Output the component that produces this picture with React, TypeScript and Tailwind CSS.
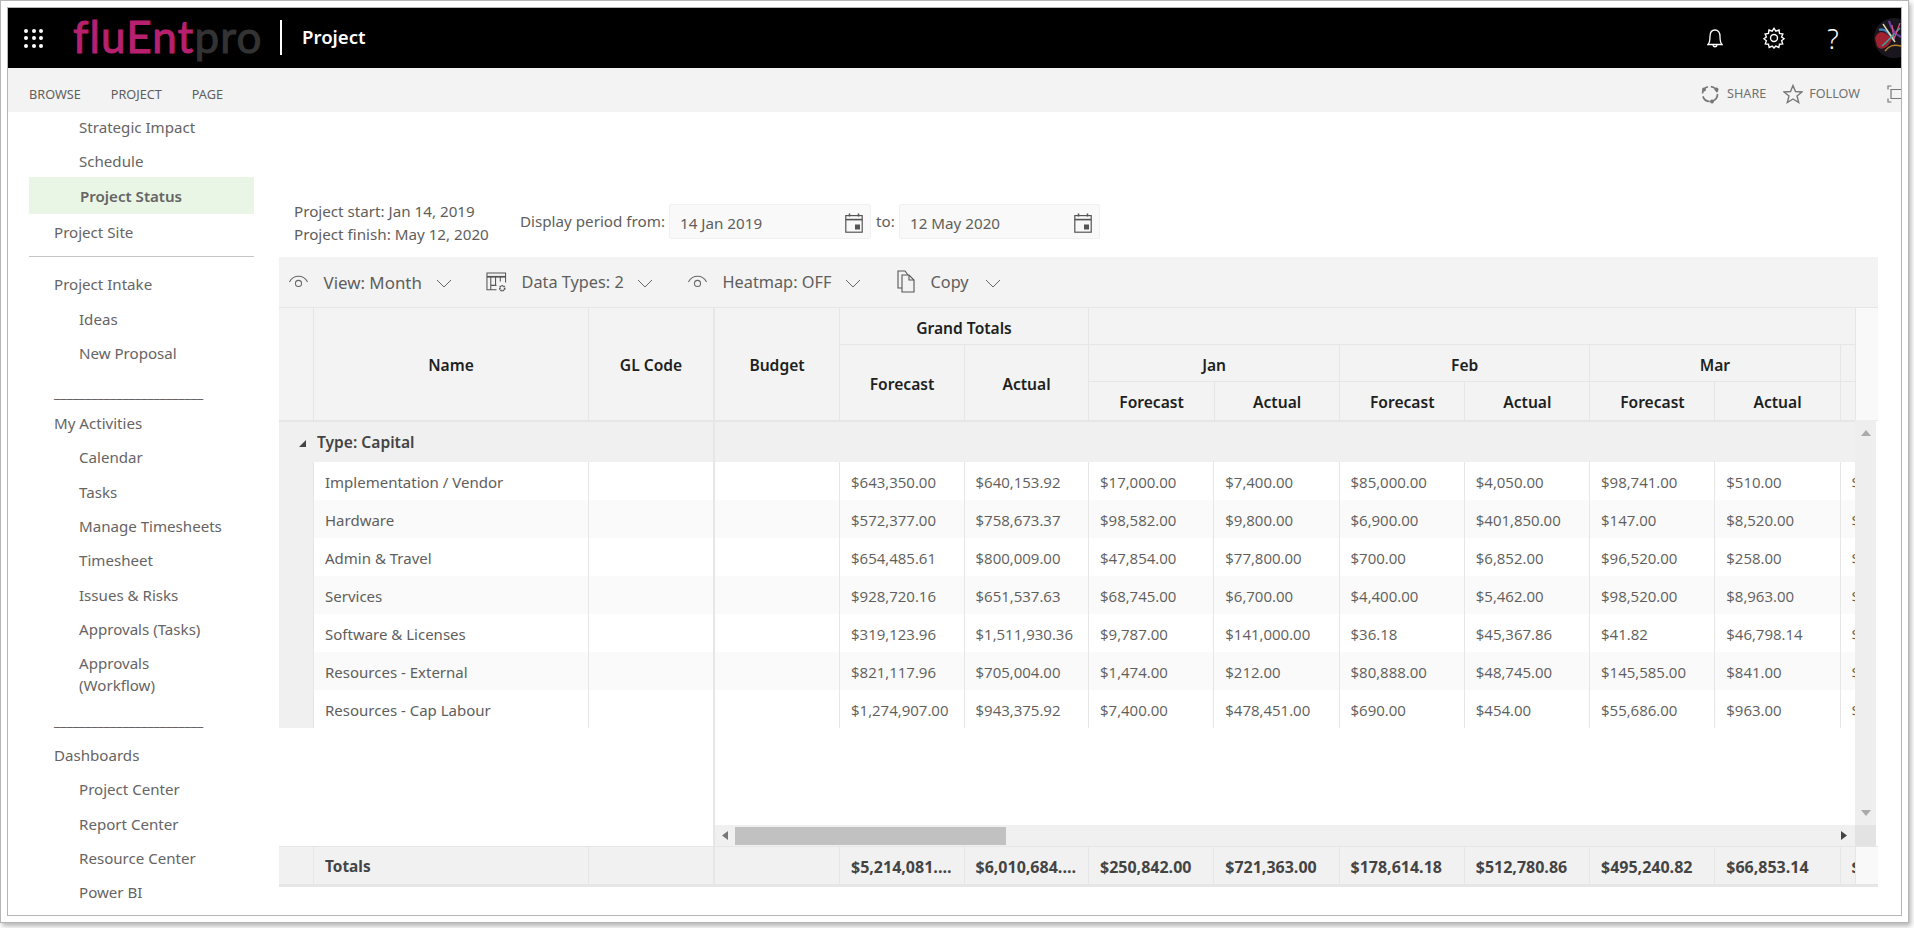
import React from "react";

const sans = "font-['Open_Sans','Noto_Sans',sans-serif]";
const ui = "font-['Noto_Sans','Open_Sans',sans-serif]";

const B = "border-[#e6e6e6]";

function Nav({ children, sub, h = "h-[34.4px]" }: { children: React.ReactNode; sub?: boolean; h?: string }) {
  return (
    <div className={`${h} flex items-center text-[15.1px] text-[#666464] leading-[22px] shrink-0 ${sub ? "pl-[71px]" : "pl-[46px]"}`}>
      <span>{children}</span>
    </div>
  );
}

function Rule({ h = "h-[34.4px]", pb = "pb-0" }: { h?: string; pb?: string }) {
  return (
    <div className={`${h} ${pb} pl-[46px] shrink-0 flex items-end text-[14px] leading-[22px] text-[#666464] overflow-hidden`}>
      <span className="whitespace-nowrap">________________________</span>
    </div>
  );
}

function Sidebar() {
  return (
    <div className="w-[271px] shrink-0 flex flex-col overflow-hidden -mt-[2px]">
      <Nav sub>Strategic Impact</Nav>
      <Nav sub h="h-[33px]">Schedule</Nav>
      <div className="ml-[21px] w-[225px] h-[37px] bg-[#e9f6e6] shrink-0 flex items-center pl-[51px] pt-[1px] text-[15.1px] font-semibold text-[#666464]">Project Status</div>
      <Nav h="h-[35px]">Project Site</Nav>
      <div className="ml-[21px] w-[225px] h-[1px] bg-[#c8c6c4] mt-[7px] mb-[9px] shrink-0" />
      <Nav h="h-[35px]">Project Intake</Nav>
      <Nav sub>Ideas</Nav>
      <Nav sub>New Proposal</Nav>
      <Rule h="h-[35.4px]" pb="pb-[2px]" />
      <Nav>My Activities</Nav>
      <Nav sub>Calendar</Nav>
      <Nav sub>Tasks</Nav>
      <Nav sub>Manage Timesheets</Nav>
      <Nav sub>Timesheet</Nav>
      <Nav sub>Issues &amp; Risks</Nav>
      <Nav sub>Approvals (Tasks)</Nav>
      <Nav sub h="h-[56px]">Approvals<br />(Workflow)</Nav>
      <Rule h="h-[35.4px]" pb="pb-[6px]" />
      <Nav>Dashboards</Nav>
      <Nav sub>Project Center</Nav>
      <Nav sub>Report Center</Nav>
      <Nav sub>Resource Center</Nav>
      <Nav sub>Power BI</Nav>
    </div>
  );
}

function Eye() {
  return (
    <svg width="22" height="16" viewBox="0 0 22 16" fill="none" stroke="#666" strokeWidth="1.1">
      <path d="M1.5 8 C4 3.5 7.5 2 11 2 C14.5 2 18 3.5 20.5 8" />
      <circle cx="11" cy="9.5" r="3.2" />
    </svg>
  );
}
function Chevron() {
  return (
    <svg width="16" height="9" viewBox="0 0 16 9" fill="none" stroke="#666" strokeWidth="1" className="shrink-0 mt-[2px]">
      <path d="M1 1 L8 8 L15 1" />
    </svg>
  );
}
function TableGear() {
  return (
    <svg width="21" height="21" viewBox="0 0 22 22" fill="none" stroke="#555" strokeWidth="1.1">
      <path d="M11 18.5 H1 V1 H20.5 V11" />
      <path d="M1 5 H20.5" strokeWidth="1.8" />
      <path d="M5 5 V18.5 M10 5 V14 M5 14 H11 M15 5 V10" />
      <circle cx="17" cy="17" r="2.6" strokeWidth="1.7" strokeDasharray="1.6 0.6" />
    </svg>
  );
}
function CopyIcon() {
  return (
    <svg width="20" height="24" viewBox="0 0 20 24" fill="none" stroke="#555" strokeWidth="1.1">
      <path d="M6 18 H2 V1 H9 L12 5" />
      <path d="M6 5 H13 L18 10 V22 H6 Z" />
      <path d="M13 5 V10 H18" />
    </svg>
  );
}
function Cal() {
  return (
    <svg width="18" height="20" viewBox="0 0 18 20" fill="none" stroke="#555" strokeWidth="1.2">
      <rect x="0.8" y="2.6" width="16.4" height="16.6" />
      <path d="M0.8 6.6 H17.2" strokeWidth="1.6" />
      <path d="M4.5 0.5 V3.5 M13.5 0.5 V3.5" strokeWidth="1.5" />
      <rect x="10" y="11.5" width="5" height="5" fill="#555" stroke="none" />
    </svg>
  );
}

function ToolItem({ icon, label, tw, size = "text-[16.3px]", after = "mr-[34px]" }: { icon: React.ReactNode; label: string; tw: string; size?: string; after?: string }) {
  return (
    <div className={`flex items-center gap-[14.5px] ${after} pt-[1px]`}>
      <div className="w-[21px] flex justify-center shrink-0 -mt-[1px]">{icon}</div>
      <span className={`${tw} ${size} text-[#605e5c] whitespace-nowrap shrink-0`}>{label}</span>
      <Chevron />
    </div>
  );
}

const rows = [
  ["$643,350.00", "$640,153.92", "$17,000.00", "$7,400.00", "$85,000.00", "$4,050.00", "$98,741.00", "$510.00", "$"],
  ["$572,377.00", "$758,673.37", "$98,582.00", "$9,800.00", "$6,900.00", "$401,850.00", "$147.00", "$8,520.00", "$"],
  ["$654,485.61", "$800,009.00", "$47,854.00", "$77,800.00", "$700.00", "$6,852.00", "$96,520.00", "$258.00", "$"],
  ["$928,720.16", "$651,537.63", "$68,745.00", "$6,700.00", "$4,400.00", "$5,462.00", "$98,520.00", "$8,963.00", "$"],
  ["$319,123.96", "$1,511,930.36", "$9,787.00", "$141,000.00", "$36.18", "$45,367.86", "$41.82", "$46,798.14", "$"],
  ["$821,117.96", "$705,004.00", "$1,474.00", "$212.00", "$80,888.00", "$48,745.00", "$145,585.00", "$841.00", "$"],
  ["$1,274,907.00", "$943,375.92", "$7,400.00", "$478,451.00", "$690.00", "$454.00", "$55,686.00", "$963.00", "$"],
];
const names = ["Implementation / Vendor", "Hardware", "Admin & Travel", "Services", "Software & Licenses", "Resources - External", "Resources - Cap Labour"];
const totals = ["$5,214,081....", "$6,010,684....", "$250,842.00", "$721,363.00", "$178,614.18", "$512,780.86", "$495,240.82", "$66,853.14", "$"];

const HT = "flex items-center justify-center font-semibold text-[15.6px] text-[#201f1e] pt-[4px]";
const HC = `${HT} border-l ${B}`;
const HU = "flex items-center justify-center font-semibold text-[15.6px] text-[#201f1e] pt-[6px]";

function Header() {
  return (
    <div className={`flex h-[112px] border-y ${B} bg-[#f3f3f3] shrink-0 box-content -mb-[1px]`}>
      <div className="w-[34px] shrink-0" />
      <div className={`w-[275px] shrink-0 ${HC}`}>Name</div>
      <div className={`w-[125px] shrink-0 ${HC}`}>GL Code</div>
      <div className={`w-[126px] shrink-0 border-l-2 ${HC}`}>Budget</div>
      <div className={`w-[249px] shrink-0 flex flex-col border-l ${B}`}>
        <div className={`h-[37px] ${HU} border-b ${B}`}>Grand Totals</div>
        <div className="flex flex-1">
          <div className={`w-[124.5px] ${HT}`}>Forecast</div>
          <div className={`w-[124.5px] ${HC}`}>Actual</div>
        </div>
      </div>
      <div className={`w-[767px] shrink-0 flex flex-col border-l ${B}`}>
        <div className={`h-[37px] border-b ${B}`} />
        <div className={`h-[37px] flex border-b ${B}`}>
          {["Jan", "Feb", "Mar"].map((m, i) => (
            <div key={m} className={`w-[250.5px] ${HU} ${i ? `border-l ${B}` : ""}`}>{m}</div>
          ))}
          <div className={`w-[15.5px] border-l ${B}`} />
        </div>
        <div className="flex flex-1">
          {["Forecast", "Actual", "Forecast", "Actual", "Forecast", "Actual"].map((m, i) => (
            <div key={i} className={`w-[125.25px] ${i ? HC : HT}`}>{m}</div>
          ))}
          <div className={`w-[15.5px] border-l ${B}`} />
        </div>
      </div>
      <div className={`flex-1 bg-[#f9f9f9] border-l ${B}`} />
    </div>
  );
}

function Cell({ children, w, bold }: { children?: React.ReactNode; w: string; bold?: boolean }) {
  return (
    <div className={`${w} shrink-0 border-l ${B} pl-[11px] flex items-center overflow-hidden whitespace-nowrap ${sans} ${bold ? "font-bold text-[16px] text-[#444] pt-[2px]" : "text-[15px] text-[#605e5c] pt-[3px]"}`}>
      {children}
    </div>
  );
}

const widths = ["w-[124.5px]", "w-[124.5px]", "w-[125.25px]", "w-[125.25px]", "w-[125.25px]", "w-[125.25px]", "w-[125.25px]", "w-[125.25px]", "w-[15.5px]"];

function Row({ i }: { i: number }) {
  return (
    <div className={`flex h-[38px] ${i % 2 ? "bg-[#fafafa]" : "bg-white"}`}>
      <div className="w-[34px] shrink-0 bg-[#f0f0f0]" />
      <div className={`w-[275px] shrink-0 border-l ${B} pl-[11px] pt-[3px] flex items-center text-[15px] text-[#605e5c]`}>{names[i]}</div>
      <div className={`w-[125px] shrink-0 border-l ${B}`} />
      <div className={`w-[126px] shrink-0 border-l-2 ${B}`} />
      {rows[i].map((t, j) => (
        <Cell key={j} w={widths[j]}>{t}</Cell>
      ))}
    </div>
  );
}

function Avatar() {
  return (
    <svg width="27" height="40" viewBox="0 0 27 40" className="shrink-0 blur-[0.4px]">
      <circle cx="20" cy="20" r="20" fill="#1a161d" />
      <path d="M1 20 C5 10 12 14 18 21 C14 31 6 33 3 28 Z" fill="#9e2230" />
      <path d="M5 12 C10 10 15 14 20 22" stroke="#3d7fb0" strokeWidth="2.4" fill="none" />
      <path d="M9 6 L21 24" stroke="#e7d9b0" strokeWidth="1.4" fill="none" />
      <path d="M8 28 C13 24 18 18 26 10" stroke="#3f9fa0" strokeWidth="1.6" fill="none" />
      <path d="M15 3 C17 10 20 16 27 19" stroke="#6b3fa0" strokeWidth="2.2" fill="none" />
      <path d="M11 33 C15 28 19 26 27 28" stroke="#b9852f" strokeWidth="1.5" fill="none" />
      <path d="M18 7 L20 21 L26 5" stroke="#d9578a" strokeWidth="1.2" fill="none" />
    </svg>
  );
}

export default function App() {
  return (
    <div className={`w-[1914px] h-[928px] bg-white overflow-hidden ${ui}`}>
      <div className="w-[1909px] h-[923px] border border-[#b5b5b5] p-[6px] shadow-[2px_3px_5px_rgba(0,0,0,0.3)] bg-white">
        <div className="w-full h-full border border-[#b5b5b5] flex flex-col overflow-hidden bg-white">
          {/* top bar */}
          <div className="h-[60px] bg-black flex items-center shrink-0">
            <div className="w-[65px] pl-[16px] flex">
              <div className="grid grid-cols-3 gap-[3.5px]">
                {Array.from({ length: 9 }).map((_, i) => (
                  <span key={i} className="w-[4px] h-[4px] rounded-full bg-white" />
                ))}
              </div>
            </div>
            <div className="w-[207px] flex items-baseline font-['Lato',sans-serif] text-[44px] leading-[56px] font-normal -mt-[4px] tracking-[1.1px] whitespace-nowrap">
              <span className="text-[#b6206f] [-webkit-text-stroke:1px_#b6206f]">fluEnt</span>
              <span className="text-[#333333] [-webkit-text-stroke:1px_#333333]">pro</span>
            </div>
            <div className="w-[2px] h-[35px] bg-white -mt-[2px]" />
            <span className="ml-[20px] text-[18.6px] font-semibold text-white -mt-[2px]">Project</span>
            <div className="flex-1" />
            <div className="flex items-center">
              <svg width="16" height="19" viewBox="0 0 16 19" fill="none" stroke="#fff" strokeWidth="1.3">
                <path d="M1 15.5 H15 C13.5 14 13 11.5 13 7.5 C13 3.5 11 1 8 1 C5 1 3 3.5 3 7.5 C3 11.5 2.5 14 1 15.5 Z" />
                <path d="M6 16 C6.5 18.3 9.5 18.3 10 16" />
              </svg>
              <svg className="ml-[40px]" width="22" height="22" viewBox="0 0 24 24" fill="none" stroke="#fff" strokeWidth="1.5">
                <circle cx="12" cy="12" r="3.8" />
                <path d="M12 1.5 L14 4.6 L17.5 3.3 L18 7 L21.7 7.6 L20.3 11 L23 12.8 L20.3 15 L21.5 18.4 L18 18.8 L17.3 22.3 L14 20.8 L12 23 L10 20.8 L6.7 22.3 L6 18.8 L2.5 18.4 L3.7 15 L1 12.8 L3.7 11 L2.3 7.6 L6 7 L6.5 3.3 L10 4.6 Z" />
              </svg>
              <span className="ml-[40px] w-[16px] text-[27px] leading-none text-white font-light text-center">?</span>
              <div className="ml-[33px]"><Avatar /></div>
            </div>
          </div>
          {/* ribbon */}
          <div className="h-[44px] bg-[#f3f3f3] flex items-center shrink-0 text-[12.7px] text-[#605e5c]">
            <div className="pl-[21px] pt-[10px] flex gap-[30px]">
              <span>BROWSE</span>
              <span>PROJECT</span>
              <span>PAGE</span>
            </div>
            <div className="flex-1" />
            <div className="flex items-center mt-[8px]">
              <svg width="20" height="20" viewBox="0 0 20 20" fill="none" stroke="#777" strokeWidth="1.7">
                <circle cx="10" cy="10" r="7.5" strokeDasharray="9 3" />
                <circle cx="4" cy="5.5" r="2" fill="#777" stroke="none" />
                <circle cx="16.5" cy="5.5" r="2" fill="#777" stroke="none" />
                <circle cx="12" cy="17.5" r="2" fill="#777" stroke="none" />
              </svg>
              <span className="ml-[7px] text-[12.6px] text-[#707070]">SHARE</span>
              <svg className="ml-[17px]" width="20" height="20" viewBox="0 0 20 20" fill="none" stroke="#777" strokeWidth="1.4">
                <path d="M10 1.5 L12.5 7.5 L19 8 L14 12 L15.7 18.5 L10 15 L4.3 18.5 L6 12 L1 8 L7.5 7.5 Z" />
              </svg>
              <span className="ml-[6px] text-[12.6px] text-[#707070]">FOLLOW</span>
              <svg className="ml-[27px]" width="14" height="18" viewBox="0 0 14 18" fill="none" stroke="#777" strokeWidth="1.2">
                <path d="M4.5 1 H1 V4.5 M1 13.5 V17 H4.5" />
                <path d="M14 4.5 H4 V13.5 H14" />
              </svg>
            </div>
          </div>
          {/* body */}
          <div className="flex-1 flex min-h-0">
            <Sidebar />
            <div className="flex-1 min-w-0 flex flex-col">
              <div className="h-[145px] shrink-0 flex pt-[88px] pl-[15px]">
                <div className="w-[226px] text-[15.2px] leading-[23px] text-[#605e5c] whitespace-nowrap">
                  <div>Project start: Jan 14, 2019</div>
                  <div>Project finish: May 12, 2020</div>
                </div>
                <div className="flex items-start h-[36px] mt-[3.5px]">
                  <span className="text-[15.2px] text-[#605e5c] leading-[34px] w-[149px] whitespace-nowrap">Display period from:</span>
                  <div className="w-[202px] h-[35px] bg-[#f9f9f9] border border-[#f0f0f0] rounded-[2px] flex items-center pl-[10px] pr-[7px] justify-between text-[15.2px] text-[#605e5c] pt-[4px]">
                    <span>14 Jan 2019</span>
                    <Cal />
                  </div>
                  <span className="text-[15.2px] text-[#605e5c] leading-[34px] w-[28px] pl-[5px]">to:</span>
                  <div className="w-[201px] h-[35px] bg-[#f9f9f9] border border-[#f0f0f0] rounded-[2px] flex items-center pl-[10px] pr-[7px] justify-between text-[15.2px] text-[#605e5c] pt-[4px]">
                    <span>12 May 2020</span>
                    <Cal />
                  </div>
                </div>
              </div>
              <div className="w-[1599px] flex flex-col">
                {/* toolbar */}
                <div className="h-[50px] bg-[#f3f3f3] flex items-center pl-[9px] shrink-0">
                  <ToolItem icon={<Eye />} tw="w-[98px]" size="text-[16.9px]" label="View: Month" />
                  <ToolItem icon={<TableGear />} tw="w-[101px]" label="Data Types: 2" />
                  <ToolItem icon={<Eye />} tw="w-[108px]" label="Heatmap: OFF" />
                  <ToolItem icon={<CopyIcon />} tw="w-[40px]" label="Copy" after="" />
                </div>
                <Header />
                {/* body */}
                <div className="flex h-[426px] shrink-0">
                  <div className="w-[1576px] shrink-0 flex flex-col">
                    <div className={`flex h-[42px] bg-[#f0f0f0] border-t-2 ${B} shrink-0`}>
                      <div className="w-[434px] shrink-0 flex items-center pl-[20px] gap-[11px] pt-[1px] font-semibold text-[15.6px] text-[#444]">
                        <svg width="7" height="7" viewBox="0 0 7 7" className="mt-[2px]"><path d="M7 0 V7 H0 Z" fill="#444" /></svg>
                        <span>Type: Capital</span>
                      </div>
                      <div className={`flex-1 border-l-2 ${B}`} />
                    </div>
                    <div className="flex-1 min-h-0">
                      {names.map((_, i) => (
                        <Row key={i} i={i} />
                      ))}
                      <div className="flex h-[97px]">
                        <div className="w-[434px] shrink-0" />
                        <div className={`flex-1 border-l-2 ${B}`} />
                      </div>
                    </div>
                    <div className="h-[21px] flex shrink-0">
                      <div className="w-[434px] shrink-0" />
                      <div className={`flex-1 border-l-2 ${B} bg-[#f0f0f0] flex items-center pl-[7px]`}>
                        <svg width="6" height="9" viewBox="0 0 6 9"><path d="M6 0 V9 L0 4.5 Z" fill="#777" /></svg>
                        <div className="ml-[7px] w-[271px] h-[18px] bg-[#c1c1c1]" />
                        <div className="flex-1" />
                        <svg className="mr-[8px]" width="6" height="9" viewBox="0 0 6 9"><path d="M0 0 V9 L6 4.5 Z" fill="#444" /></svg>
                      </div>
                    </div>
                  </div>
                  <div className="w-[21px] shrink-0 flex flex-col bg-[#eeeeee]">
                    <div className="flex-1 flex flex-col justify-between items-center">
                      <svg className="mt-[10px]" width="10" height="6" viewBox="0 0 10 6"><path d="M0 6 H10 L5 0 Z" fill="#aaa" /></svg>
                      <svg className="mb-[9px]" width="10" height="6" viewBox="0 0 10 6"><path d="M0 0 H10 L5 6 Z" fill="#aaa" /></svg>
                    </div>
                    <div className="h-[21px] bg-[#e3e3e3]" />
                  </div>
                </div>
                {/* totals */}
                <div className={`flex h-[41px] bg-[#f1f1f1] border-t ${B} border-b-[3px] shrink-0`}>
                  <div className="w-[34px] shrink-0" />
                  <div className={`w-[275px] shrink-0 border-l ${B} pl-[11px] pt-[2px] flex items-center font-bold text-[15.4px] text-[#444]`}>Totals</div>
                  <div className={`w-[125px] shrink-0 border-l ${B}`} />
                  <div className={`w-[126px] shrink-0 border-l-2 ${B}`} />
                  {totals.map((t, j) => (
                    <Cell key={j} bold w={widths[j]}>{t}</Cell>
                  ))}
                  <div className={`flex-1 bg-[#f9f9f9] border-l ${B}`} />
                </div>
              </div>
            </div>
          </div>
        </div>
      </div>
    </div>
  );
}
